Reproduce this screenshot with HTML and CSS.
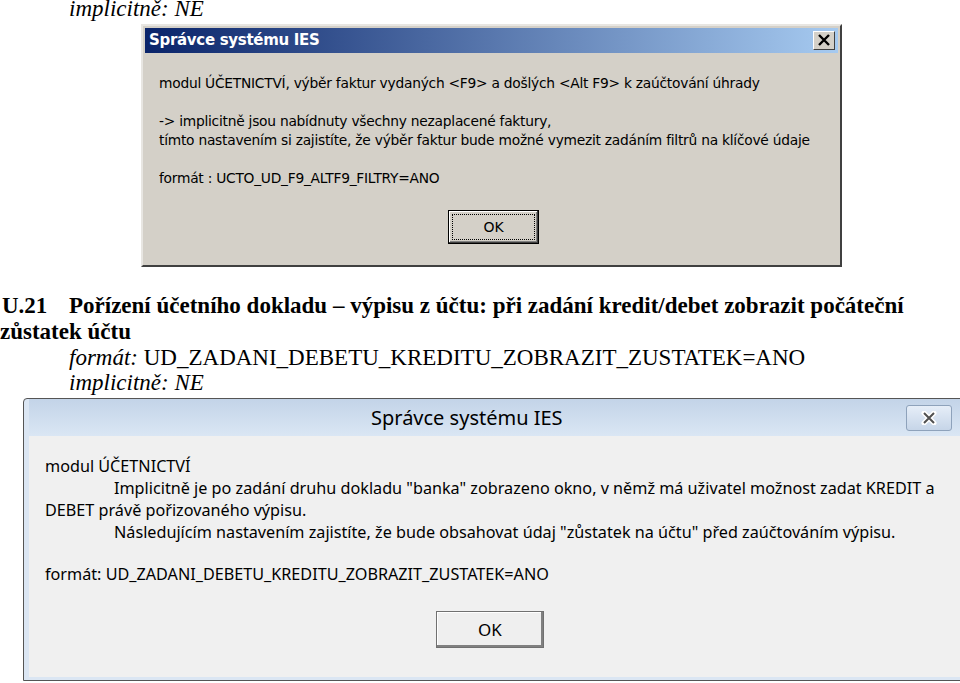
FILE: index.html
```html
<!DOCTYPE html>
<html lang="cs">
<head>
  <meta charset="UTF-8">
  <title>U.21 Pořízení účetního dokladu</title>
  <link rel="stylesheet" href="styles.css">
</head>
<body>
  <p class="param top-param"><i>implicitně: NE</i></p>

  <!-- classic dialog -->
  <div class="dlg-classic">
    <div class="classic-title">
      <span>Správce systému IES</span>
      <span class="classic-close">
        <svg width="14" height="12" viewBox="0 0 14 12"><path d="M2 1 L12 11 M12 1 L2 11" stroke="#000" stroke-width="2.4"/></svg>
      </span>
    </div>
    <div class="classic-body">
      <p>modul ÚČETNICTVÍ, výběr faktur vydaných &lt;F9&gt; a došlých &lt;Alt F9&gt; k zaúčtování úhrady</p>
      <p>-&gt; implicitně jsou nabídnuty všechny nezaplacené faktury,<br>tímto nastavením si zajistíte, že výběr faktur bude možné vymezit zadáním filtrů na klíčové údaje</p>
      <p>formát : UCTO_UD_F9_ALTF9_FILTRY=ANO</p>
      <div class="classic-actions"><button class="classic-ok"><span>OK</span></button></div>
    </div>
  </div>

  <h2 class="section"><span class="num">U.21</span>Pořízení účetního dokladu – výpisu z účtu: při zadání kredit/debet zobrazit počáteční zůstatek účtu</h2>
  <p class="param"><i>formát:</i> UD_ZADANI_DEBETU_KREDITU_ZOBRAZIT_ZUSTATEK=ANO</p>
  <p class="param"><i>implicitně: NE</i></p>

  <!-- aero dialog -->
  <div class="dlg-aero">
    <div class="aero-title">
      <span class="aero-caption">Správce systému IES</span>
      <span class="aero-close">
        <svg width="20" height="14" viewBox="0 0 20 14"><path d="M5 2 L15 12 M15 2 L5 12" stroke="#fff" stroke-width="5" stroke-linecap="round"/><path d="M5 2 L15 12 M15 2 L5 12" stroke="#505050" stroke-width="2"/></svg>
      </span>
    </div>
    <div class="aero-body">
      <p>modul ÚČETNICTVÍ<br>
        <span class="indent"></span>Implicitně je po zadání druhu dokladu "banka" zobrazeno okno, v němž má uživatel možnost zadat KREDIT a DEBET právě pořizovaného výpisu.<br>
        <span class="indent"></span>Následujícím nastavením zajistíte, že bude obsahovat údaj "zůstatek na účtu" před zaúčtováním výpisu.</p>
      <p>formát: UD_ZADANI_DEBETU_KREDITU_ZOBRAZIT_ZUSTATEK=ANO</p>
      <div class="aero-actions"><button class="aero-ok">OK</button></div>
    </div>
  </div>
</body>
</html>
```

FILE: styles.css
```css
body {
  margin: 0;
  background: #fff;
  font-family: "Liberation Serif", "Times New Roman", serif;
  color: #000;
  overflow: hidden;
}

p {
  margin: 0;
}

.param {
  font-size: 23px;
  line-height: 25.5px;
  padding-left: 69px;
}

.top-param {
  margin-top: -4px;
}

/* classic windows dialog */
.dlg-classic {
  margin: 2px 0 0 141px;
  width: 693px;
  border: 2px solid;
  border-color: #e8e6e2 #404040 #404040 #e8e6e2;
  background: #d4d0c8;
  padding: 2px;
}

.classic-title {
  height: 25px;
  display: flex;
  align-items: center;
  justify-content: space-between;
  padding: 0 3px 0 4px;
  background: linear-gradient(to right, #0a246a, #a6caf0);
  color: #fff;
  font-family: "DejaVu Sans", Verdana, sans-serif;
  font-weight: bold;
  font-size: 15px;
  letter-spacing: -0.3px;
}

.classic-close {
  width: 22px;
  height: 19px;
  display: flex;
  align-items: center;
  justify-content: center;
  background: #d4d0c8;
  border: 1px solid;
  border-color: #fff #404040 #404040 #fff;
  box-sizing: border-box;
}

.classic-body {
  padding: 21px 4px 19px 14px;
  font-family: "DejaVu Sans", Tahoma, sans-serif;
  font-size: 13.8px;
  line-height: 19px;
  letter-spacing: -0.25px;
  white-space: nowrap;
}

.classic-body p + p {
  margin-top: 19px;
}

.classic-actions {
  margin-top: 22px;
  padding-left: 289px;
}

.classic-ok {
  width: 91px;
  height: 34px;
  padding: 3px;
  background: #d4d0c8;
  border: 1px solid #000;
  box-shadow: inset -1px -1px 0 #404040, inset 1px 1px 0 #fff, inset -2px -2px 0 #808080;
  font-family: "DejaVu Sans", Tahoma, sans-serif;
  font-size: 14px;
}

.classic-ok span {
  display: block;
  height: 100%;
  line-height: 24px;
  border: 1px dotted #000;
  box-sizing: border-box;
}

/* section heading */
.section {
  margin: 26px 0 0;
  font-size: 23px;
  line-height: 26px;
  font-weight: bold;
}

.section .num {
  display: inline-block;
  width: 69px;
  padding-left: 2px;
  box-sizing: border-box;
}

/* aero dialog */
.dlg-aero {
  margin: 2px 0 0 23px;
  width: 960px;
  height: 283px;
  border: 1px solid #555;
  border-radius: 4px 4px 0 0;
  background: #dbe6f3;
  padding: 0 0 3px 5px;
  box-sizing: border-box;
  display: flex;
  flex-direction: column;
}

.aero-title {
  height: 37px;
  flex: none;
  display: flex;
  align-items: center;
  background: linear-gradient(#c3d4e8, #dae6f4);
  font-family: "Noto Sans", "Segoe UI", sans-serif;
  font-size: 20px;
  color: #000;
  position: relative;
}

.aero-caption {
  margin-left: 342px;
}

.aero-close {
  position: absolute;
  right: 30px;
  top: 6px;
  width: 46px;
  height: 26px;
  display: flex;
  align-items: center;
  justify-content: center;
  border: 1px solid #8ea2bb;
  border-radius: 3px;
  background: linear-gradient(#e6eef8, #c6d5e8);
  box-sizing: border-box;
}

.aero-body {
  flex: 1;
  background: #f0f0f0;
  padding: 19px 0 0 16px;
  font-family: "Noto Sans", "Segoe UI", sans-serif;
  font-size: 16.2px;
  line-height: 22px;
  color: #000;
}

.aero-body p {
  width: 900px;
}

.aero-body p + p {
  margin-top: 20px;
}

.indent {
  display: inline-block;
  width: 69px;
}

.aero-actions {
  margin-top: 26px;
  padding-left: 391px;
}

.aero-ok {
  width: 108px;
  height: 37px;
  background: #efefef;
  border: 1px solid #707070;
  box-shadow: inset -2px -2px 0 #808080, inset 1px 1px 0 #fff;
  font-family: "Noto Sans", "Segoe UI", sans-serif;
  font-size: 17px;
  color: #000;
}
```
